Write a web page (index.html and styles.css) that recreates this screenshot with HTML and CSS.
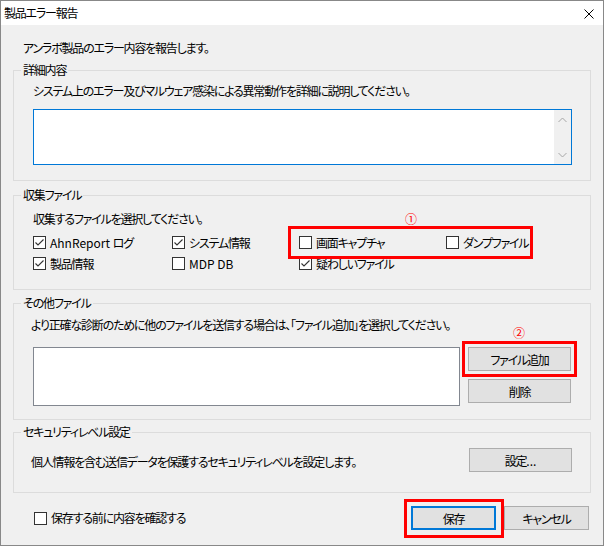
FILE: index.html
```html
<!DOCTYPE html>
<html>
<head>
  <meta charset="utf-8">
  <link rel="stylesheet" href="styles.css">
</head>
<body>
  <div class="ventana">
    <!-- BARRA DE TITULO -->
    <div class="titulo">
      <span>製品エラー報告</span>
      <svg class="cerrar" width="10" height="10" viewBox="0 0 10 10">
        <path d="M0.5 0.5 L9.5 9.5 M9.5 0.5 L0.5 9.5" stroke="#000" stroke-width="1" fill="none"/>
      </svg>
    </div>

    <div class="contenido">
      <p class="intro">アンラボ製品のエラー内容を報告します。</p>

      <!-- DETALLE -->
      <fieldset class="grupo g1">
        <legend>詳細内容</legend>
        <p class="desc">システム上のエラー及びマルウェア感染による異常動作を詳細に説明してください。</p>
        <div class="memo">
          <div class="memo-area"></div>
          <div class="vscroll">
            <svg width="9" height="6" viewBox="0 0 9 6"><path d="M0.5 5 L4.5 1 L8.5 5" stroke="#a6a6a6" fill="none"/></svg>
            <svg width="9" height="6" viewBox="0 0 9 6"><path d="M0.5 1 L4.5 5 L8.5 1" stroke="#a6a6a6" fill="none"/></svg>
          </div>
        </div>
      </fieldset>

      <!-- ARCHIVOS -->
      <fieldset class="grupo g2">
        <legend>収集ファイル</legend>
        <p class="desc">収集するファイルを選択してください。</p>
        <div class="checks">
          <label class="chk on"><span class="caja"></span><span><span class="lat">AhnReport </span>ログ</span></label>
          <label class="chk on"><span class="caja"></span>システム情報</label>
          <label class="chk"><span class="caja"></span>画面キャプチャ</label>
          <label class="chk"><span class="caja"></span>ダンプファイル</label>
          <label class="chk on"><span class="caja"></span>製品情報</label>
          <label class="chk"><span class="caja"></span><span class="lat">MDP DB</span></label>
          <label class="chk on"><span class="caja"></span>疑わしいファイル</label>
          <span class="marca m1"></span>
          <span class="numero n1">①</span>
        </div>
      </fieldset>

      <!-- OTROS -->
      <fieldset class="grupo g3">
        <legend>その他ファイル</legend>
        <p class="desc corr">より正確な診断のために他のファイルを送信する場合は、「ファイル追加」を選択してください。</p>
        <div class="fila-lista">
          <div class="lista"></div>
          <div class="botones">
            <div class="anotado">
              <button class="btn">ファイル追加</button>
              <span class="marca m2"></span>
              <span class="numero n2">②</span>
            </div>
            <button class="btn">削除</button>
          </div>
        </div>
      </fieldset>

      <!-- SEGURIDAD -->
      <fieldset class="grupo g4">
        <legend>セキュリティレベル設定</legend>
        <div class="fila-seg">
          <p class="desc corr">個人情報を含む送信データを保護するセキュリティレベルを設定します。</p>
          <button class="btn">設定<span class="lat">...</span></button>
        </div>
      </fieldset>

      <!-- PIE -->
      <div class="pie">
        <label class="chk"><span class="caja"></span>保存する前に内容を確認する</label>
        <div class="acciones">
          <div class="anotado">
            <button class="btn defecto">保存</button>
            <span class="marca m3"></span>
          </div>
          <button class="btn cancelar">キャンセル</button>
        </div>
      </div>
    </div>
  </div>
</body>
</html>
```

FILE: styles.css
```css
/* GENERAL */
* { box-sizing: border-box; }

body {
  margin: 0;
  width: 604px;
  height: 547px;
  background: #ffffff;
  font-family: "Noto Sans CJK JP", "Noto Sans", sans-serif;
  font-size: 12px;
  line-height: 16px;
  letter-spacing: -1.2px;
  color: #000;
  font-feature-settings: "palt";
}

p { margin: 0; }

.lat { letter-spacing: 0; }

.ventana {
  width: 604px;
  height: 546px;
  border: 1px solid #888888;
  display: flex;
  flex-direction: column;
}

/* TITULO */
.titulo {
  height: 24px;
  background: #ffffff;
  display: flex;
  align-items: center;
  justify-content: space-between;
  padding: 0 9px 0 3px;
}

.cerrar { display: block; margin-top: 1px; }

/* CONTENIDO */
.contenido {
  flex: 1;
  background: #f0f0f0;
  padding: 15px 12px 0 12px;
}

.intro { padding-left: 10px; }

.grupo {
  margin: 6px 0 0 0;
  padding: 0 18px 15px 19px;
  border: 1px solid #dcdcdc;
  min-width: 0;
}

.grupo legend {
  margin-left: -12px;
  padding: 0 2px;
  line-height: 16px;
}

.g1 .desc { padding-top: 5px; }
.g2 .desc { padding-top: 8px; }
.g3 { margin-top: 5px; padding-bottom: 13px; }
.g3 .desc { padding-top: 6px; }
.g4 { margin-top: 4px; padding-bottom: 20px; }

.corr { margin-left: -2px; }

/* MEMO */
.memo {
  margin-top: 10px;
  width: 539px;
  height: 56px;
  border: 1px solid #0078d7;
  background: #ffffff;
  display: flex;
}

.memo-area { flex: 1; }

.vscroll {
  width: 17px;
  background: #f0f0f0;
  display: flex;
  flex-direction: column;
  justify-content: space-between;
  align-items: center;
  padding: 7px 0 6px 0;
}

.vscroll svg { display: block; }

/* CASILLAS */
.checks {
  position: relative;
  margin-top: 5px;
  display: grid;
  grid-template-columns: 139px 127px 147px 1fr;
  grid-auto-rows: 21px;
}

.chk {
  display: flex;
  align-items: center;
  gap: 4px;
  white-space: nowrap;
}

.caja {
  width: 13px;
  height: 13px;
  border: 1px solid #333333;
  background: #ffffff;
  flex: none;
}

.chk.on .caja {
  background: #ffffff url("data:image/svg+xml,%3Csvg xmlns='http://www.w3.org/2000/svg' width='11' height='11'%3E%3Cpath d='M1.5 5.5 L4 8 L9.5 2.5' stroke='%23333' stroke-width='1.1' fill='none'/%3E%3C/svg%3E") no-repeat center;
}

/* ANOTACIONES ROJAS */
.marca {
  position: absolute;
  border: 3px solid #ff0000;
  pointer-events: none;
}

.numero {
  position: absolute;
  color: #ff0000;
  font-size: 12px;
  line-height: 12px;
  letter-spacing: 0;
}

.m1 { left: 255px; top: -6px; width: 245px; height: 33px; }
.n1 { left: 372px; top: -19px; }

.anotado { position: relative; }
.m2 { left: -6px; top: -6px; right: -6px; bottom: -6px; }
.n2 { left: 45px; top: -20px; }
.m3 { left: -7px; top: -7px; right: -8px; bottom: -8px; }

/* LISTA */
.fila-lista {
  margin-top: 14px;
  display: flex;
  gap: 8px;
}

.lista {
  width: 427px;
  height: 59px;
  border: 1px solid #828790;
  background: #ffffff;
}

.botones {
  display: flex;
  flex-direction: column;
  gap: 8px;
}

/* BOTONES */
.btn {
  width: 103px;
  height: 24px;
  margin: 0;
  padding: 0;
  border: 1px solid #adadad;
  background: #e1e1e1;
  font-family: inherit;
  font-size: 12px;
  letter-spacing: inherit;
  font-feature-settings: "palt";
  color: #000;
}

.fila-seg {
  margin-top: 8px;
  display: flex;
  justify-content: space-between;
  align-items: center;
}

.fila-seg .desc { margin-top: 3px; }

/* PIE */
.pie {
  margin-top: 13px;
  padding: 0 2px 0 21px;
  display: flex;
  justify-content: space-between;
  align-items: center;
}

.acciones {
  display: flex;
  gap: 8px;
}

.btn.defecto,
.btn.cancelar { width: 85px; }

.btn.defecto { border: 2px solid #0078d7; }
```
